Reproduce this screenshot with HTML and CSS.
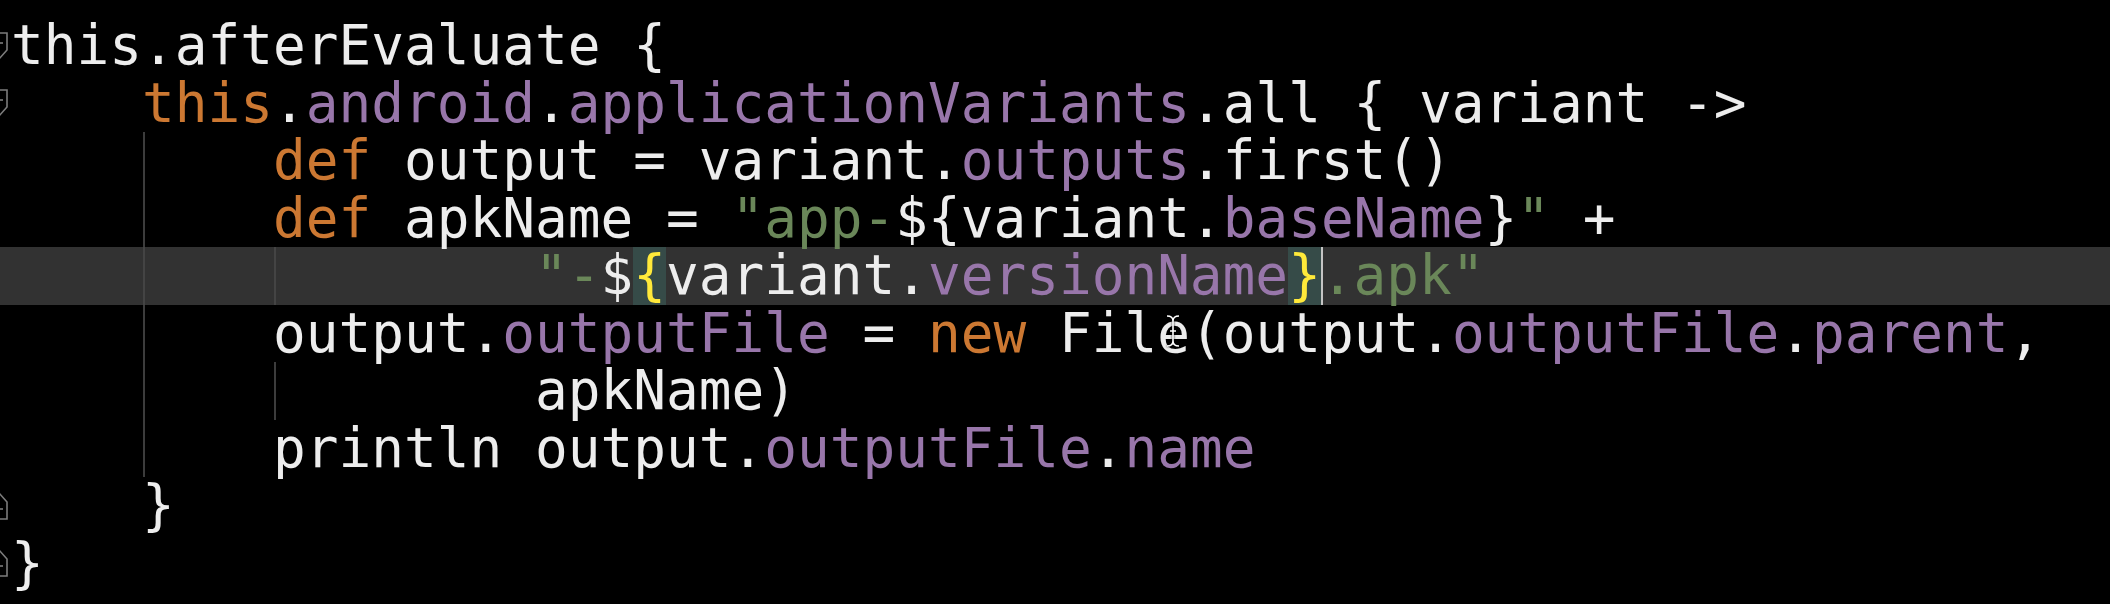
FILE: index.html
```html
<!DOCTYPE html>
<html lang="en">
<head>
  <meta charset="UTF-8" />
  <title>build.gradle</title>
  <link rel="stylesheet" href="styles.css">
</head>
<body>
  <div class="editor">
    <div class="line">
      <span class="gutter"><svg class="fold" viewBox="0 0 18 28"><path d="M1 1H17V18L9 27L1 18Z"/><path d="M5 11H13"/></svg></span>
      <span class="code">this.afterEvaluate {</span>
    </div>
    <div class="line">
      <span class="gutter"><svg class="fold" viewBox="0 0 18 28"><path d="M1 1H17V18L9 27L1 18Z"/><path d="M5 11H13"/></svg></span>
      <span class="code">    <span class="kw">this</span>.<span class="fld">android</span>.<span class="fld">applicationVariants</span>.all { variant -&gt;</span>
    </div>
    <div class="line">
      <span class="gutter"></span>
      <span class="code">    <span class="guide">    </span><span class="kw">def</span> output = variant.<span class="fld">outputs</span>.first()</span>
    </div>
    <div class="line">
      <span class="gutter"></span>
      <span class="code">    <span class="guide">    </span><span class="kw">def</span> apkName = <span class="str">"app-</span>${variant.<span class="fld">baseName</span>}<span class="str">"</span> +</span>
    </div>
    <div class="line current">
      <span class="gutter"></span>
      <span class="code">    <span class="guide">    </span><span class="guide">    </span>    <span class="str">"-</span>$<span class="match">{</span>variant.<span class="fld">versionName</span><span class="match">}</span><span class="caret"></span><span class="str">.apk"</span></span>
    </div>
    <div class="line">
      <span class="gutter"></span>
      <span class="code">    <span class="guide">    </span>output.<span class="fld">outputFile</span> = <span class="kw">new</span> Fil<span class="pointer">e<svg class="ibeam" viewBox="0 0 16 34"><path d="M2 2Q8 2 8 7Q8 2 14 2M8 7V27M2 32Q8 32 8 27Q8 32 14 32M5 17H11"/></svg></span>(output.<span class="fld">outputFile</span>.<span class="fld">parent</span>,</span>
    </div>
    <div class="line">
      <span class="gutter"></span>
      <span class="code">    <span class="guide">    </span><span class="guide">    </span>    apkName)</span>
    </div>
    <div class="line">
      <span class="gutter"></span>
      <span class="code">    <span class="guide">    </span>println output.<span class="fld">outputFile</span>.<span class="fld">name</span></span>
    </div>
    <div class="line">
      <span class="gutter"><svg class="fold" viewBox="0 0 18 28"><path d="M1 27H17V10L9 1L1 10Z"/><path d="M5 17H13"/></svg></span>
      <span class="code">    }</span>
    </div>
    <div class="line">
      <span class="gutter"><svg class="fold" viewBox="0 0 18 28"><path d="M1 27H17V10L9 1L1 10Z"/><path d="M5 17H13"/></svg></span>
      <span class="code">}</span>
    </div>
  </div>
</body>
</html>
```

FILE: styles.css
```css
body {
  margin: 0;
  background: #000;
  overflow: hidden;
}

/* Редактор кода */
.editor {
  padding-top: 17px;
  font-family: "DejaVu Sans Mono", monospace;
  font-size: 54.4px;
  color: #ededed;
}

.line {
  display: flex;
  align-items: center;
  height: 57.5px;
  line-height: 57.5px;
}

.line.current {
  background: #323232;
}

.gutter {
  width: 11px;
  height: 100%;
  display: flex;
  align-items: center;
  flex-shrink: 0;
}

.fold {
  width: 18px;
  height: 28px;
  margin-left: -10px;
  fill: none;
  stroke: #7c7c7c;
  stroke-width: 1.6;
}

.code {
  white-space: pre;
  height: 100%;
}

/* Подсветка синтаксиса */
.kw { color: #cc7832; }
.fld { color: #9876aa; }
.str { color: #6a8759; }

.match {
  display: inline-block;
  vertical-align: top;
  height: 100%;
  background: #364b48;
  color: #ffe93a;
}

.caret {
  display: inline-block;
  vertical-align: top;
  width: 2px;
  margin-right: -2px;
  height: 100%;
  background: #c4c4c4;
}

/* Направляющие отступов */
.guide {
  display: inline-block;
  vertical-align: top;
  height: 100%;
  background: linear-gradient(#3c3c3c, #3c3c3c) 1px 0 / 2px 100% no-repeat;
}

.current .guide {
  background-image: linear-gradient(#444, #444);
}

/* Курсор мыши поверх текста */
.pointer {
  position: relative;
}

.ibeam {
  position: absolute;
  left: 8px;
  top: 12px;
  width: 16px;
  height: 34px;
  fill: none;
  stroke: #fff;
  stroke-width: 1.6;
  filter: drop-shadow(0 0 1px #000);
}
```
